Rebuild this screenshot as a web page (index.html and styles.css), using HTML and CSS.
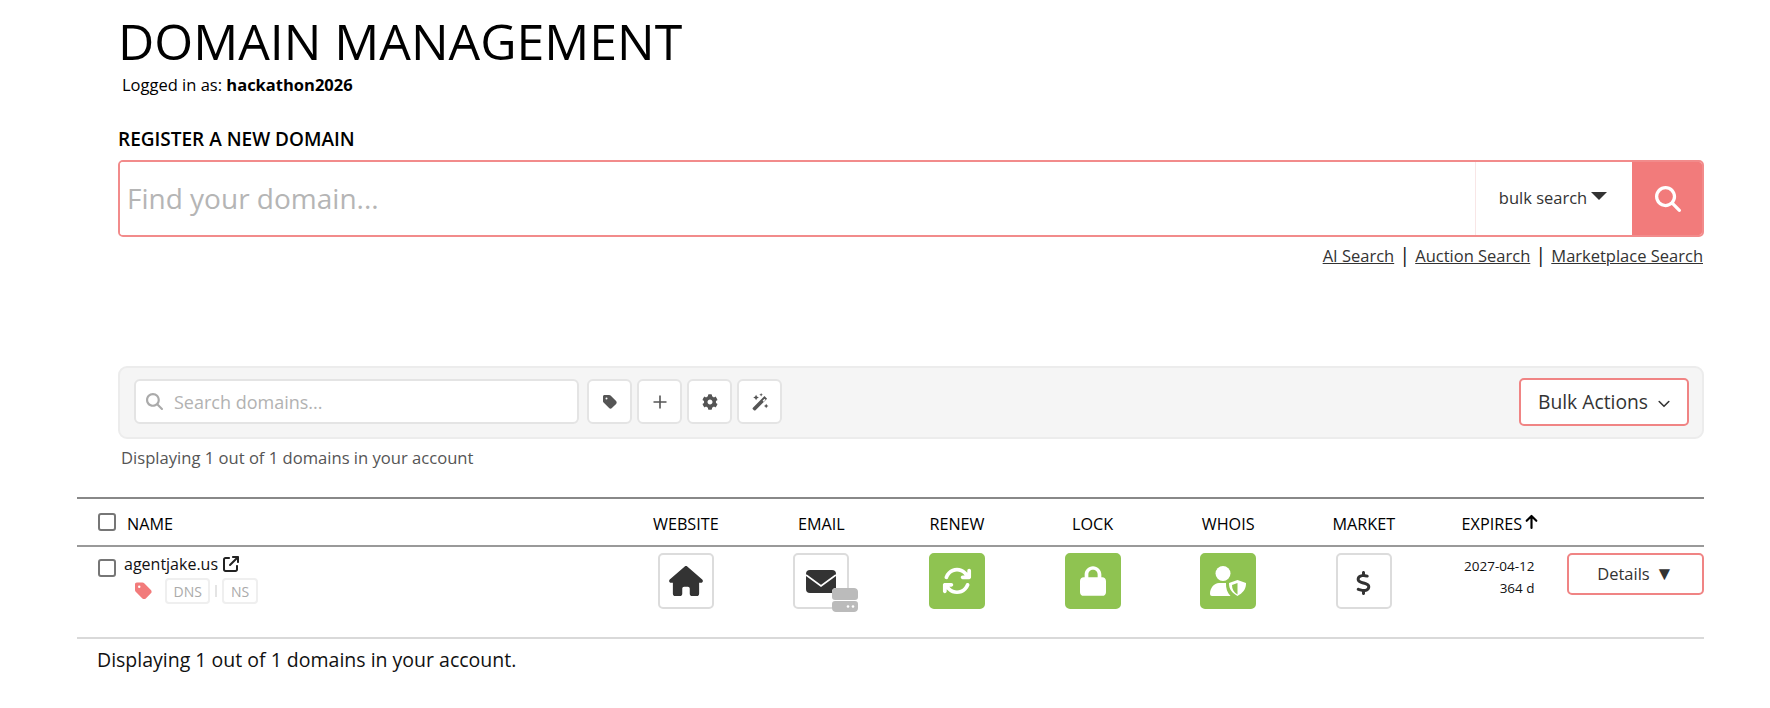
FILE: index.html
```html
<!DOCTYPE html>
<html lang="en">
<head>
<meta charset="utf-8">
<title>Domain Management</title>
<link rel="stylesheet" href="styles.css">
</head>
<body>
<main class="page">
  <h1 class="title">DOMAIN MANAGEMENT</h1>
  <p class="login">Logged in as: <b>hackathon2026</b></p>

  <h2 class="register">REGISTER A NEW DOMAIN</h2>
  <form class="finder">
    <input class="finder-input" type="text" placeholder="Find your domain...">
    <div class="bulk">bulk search<span class="caret"></span></div>
    <button class="finder-go" type="button" aria-label="Search">
      <svg class="i-go" viewBox="0 0 512 512"><path d="M416 208c0 45.900-14.900 88.300-40 122.700L502.600 457.400c12.500 12.500 12.500 32.800 0 45.300s-32.800 12.500-45.300 0L330.700 376c-34.400 25.200-76.800 40-122.700 40C93.100 416 0 322.900 0 208S93.100 0 208 0S416 93.100 416 208zM208 352a144 144 0 1 0 0-288 144 144 0 1 0 0 288z"/></svg>
    </button>
  </form>
  <div class="links">
    <a href="#">AI Search</a><span class="pipe">|</span><a href="#">Auction Search</a><span class="pipe">|</span><a href="#">Marketplace Search</a>
  </div>

  <section class="toolbar">
    <label class="dsearch">
      <svg class="i-dsearch" viewBox="0 0 512 512"><path d="M416 208c0 45.900-14.900 88.300-40 122.700L502.600 457.400c12.500 12.500 12.500 32.800 0 45.300s-32.800 12.500-45.300 0L330.700 376c-34.400 25.200-76.800 40-122.700 40C93.100 416 0 322.900 0 208S93.100 0 208 0S416 93.100 416 208zM208 352a144 144 0 1 0 0-288 144 144 0 1 0 0 288z"/></svg>
      <input class="dsearch-input" type="text" placeholder="Search domains...">
    </label>
    <button class="tool" type="button" aria-label="Tags"><svg class="i-tool" viewBox="0 0 448 512"><path d="M0 80V229.500c0 17 6.700 33.300 18.700 45.300l176 176c25 25 65.500 25 90.500 0L418.700 317.300c25-25 25-65.500 0-90.500l-176-176c-12-12-28.300-18.700-45.300-18.700H48C21.500 32 0 53.500 0 80zm112 32a32 32 0 1 1 0 64 32 32 0 1 1 0-64z"/></svg></button>
    <button class="tool" type="button" aria-label="Add"><svg class="i-tool" viewBox="0 0 16 16"><path d="M7.200 1.500h1.600v5.700h5.700v1.600H8.800v5.700H7.200V8.800H1.500V7.200h5.700z"/></svg></button>
    <button class="tool" type="button" aria-label="Settings"><svg class="i-tool" viewBox="0 0 512 512"><path d="M487.400 315.700l-42.600-24.600c4.300-23.200 4.300-47 0-70.200l42.600-24.600c4.900-2.800 7.100-8.600 5.500-14-11.100-35.600-30-67.800-54.700-94.600-3.800-4.100-10-5.100-14.800-2.300L380.800 110c-17.900-15.400-38.500-27.300-60.800-35.100V25.800c0-5.600-3.900-10.500-9.400-11.700-36.700-8.200-74.300-7.800-109.200 0-5.500 1.200-9.400 6.100-9.400 11.700V75c-22.200 7.900-42.800 19.800-60.800 35.100L88.700 85.500c-4.900-2.800-11-1.900-14.800 2.300-24.700 26.700-43.600 58.900-54.700 94.600-1.700 5.400.6 11.200 5.500 14L67.300 221c-4.300 23.200-4.300 47 0 70.200l-42.600 24.600c-4.900 2.800-7.100 8.600-5.500 14 11.100 35.600 30 67.800 54.700 94.600 3.800 4.100 10 5.100 14.800 2.300l42.600-24.600c17.900 15.400 38.500 27.300 60.800 35.100v49.200c0 5.600 3.900 10.500 9.400 11.700 36.700 8.200 74.300 7.800 109.200 0 5.500-1.200 9.400-6.100 9.400-11.700v-49.200c22.200-7.900 42.800-19.800 60.800-35.100l42.600 24.600c4.900 2.800 11 1.900 14.800-2.300 24.700-26.700 43.600-58.900 54.700-94.600 1.500-5.500-.7-11.300-5.600-14.100zM256 336c-44.100 0-80-35.900-80-80s35.900-80 80-80 80 35.900 80 80-35.900 80-80 80z"/></svg></button>
    <button class="tool" type="button" aria-label="Magic"><svg class="i-wand" viewBox="0 0 16 16"><path d="M12 2.700l2.300 2.300L4 15.300a1 1 0 0 1-1.400 0l-.9-.9a1 1 0 0 1 0-1.400zM10.300 6.800l.9.900 1.700-1.700-.9-.900z" fill-rule="evenodd"/><path d="M4.500 1.500l.8 1.700 1.700.8-1.700.8-.8 1.700-.8-1.700L2 4l1.700-.8zM9 0l.5 1.100 1.100.5-1.100.5L9 3.200l-.5-1.100-1.100-.5 1.100-.5zM13.500 9.500l.7 1.300 1.300.7-1.300.7-.7 1.300-.7-1.300-1.300-.7 1.300-.7z"/></svg></button>
    <button class="bulk-actions" type="button">Bulk Actions<svg class="i-chev" viewBox="0 0 12 8"><path d="M1.200 1.500L6 6.300l4.800-4.800" fill="none" stroke="currentColor" stroke-width="1.600" stroke-linecap="round" stroke-linejoin="round"/></svg></button>
  </section>
  <p class="count">Displaying 1 out of 1 domains in your account</p>

  <section class="table">
    <div class="row head">
      <div class="c-name"><input class="check" type="checkbox" aria-label="Select all"><span class="name-label">NAME</span></div>
      <div class="c-mid">WEBSITE</div>
      <div class="c-mid">EMAIL</div>
      <div class="c-mid">RENEW</div>
      <div class="c-mid">LOCK</div>
      <div class="c-mid">WHOIS</div>
      <div class="c-mid">MARKET</div>
      <div class="c-exp">EXPIRES<svg class="i-arrow" viewBox="0 0 12 14"><path d="M6 13V2M1.500 6.300L6 1.800l4.500 4.500" fill="none" stroke="currentColor" stroke-width="2" stroke-linecap="round" stroke-linejoin="round"/></svg></div>
      <div></div>
    </div>
    <div class="row body">
      <div class="c-domain">
        <input class="check check-row" type="checkbox" aria-label="Select agentjake.us">
        <div class="domain-info">
          <div class="domain-line">agentjake.us<svg class="i-ext" viewBox="0 0 512 512"><path d="M320 0c-17.700 0-32 14.300-32 32s14.300 32 32 32h82.700L201.400 265.400c-12.500 12.500-12.500 32.800 0 45.300s32.800 12.500 45.300 0L448 109.300V192c0 17.700 14.300 32 32 32s32-14.300 32-32V32c0-17.700-14.300-32-32-32H320zM80 32C35.800 32 0 67.800 0 112V432c0 44.200 35.800 80 80 80H400c44.200 0 80-35.800 80-80V320c0-17.700-14.300-32-32-32s-32 14.300-32 32V432c0 8.800-7.200 16-16 16H80c-8.800 0-16-7.200-16-16V112c0-8.800 7.200-16 16-16H192c17.700 0 32-14.300 32-32s-14.300-32-32-32H80z"/></svg></div>
          <div class="domain-tags">
            <svg class="i-tag" viewBox="0 0 448 512"><path d="M0 80V229.500c0 17 6.700 33.300 18.700 45.300l176 176c25 25 65.500 25 90.500 0L418.700 317.300c25-25 25-65.500 0-90.500l-176-176c-12-12-28.300-18.700-45.300-18.700H48C21.500 32 0 53.500 0 80zm112 32a32 32 0 1 1 0 64 32 32 0 1 1 0-64z"/></svg>
            <span class="chip">DNS</span><span class="chip-sep"></span><span class="chip">NS</span>
          </div>
        </div>
      </div>
      <div class="c-mid"><span class="tile"><svg class="i-home" viewBox="0 0 576 512"><path d="M575.800 255.500c0 18-15 32.100-32 32.100h-32l.7 160.200c0 2.700-.2 5.400-.5 8.100V472c0 22.100-17.900 40-40 40H456c-1.100 0-2.200 0-3.300-.1c-1.400 .1-2.800 .1-4.200 .1H416 392c-22.100 0-40-17.900-40-40V448 384c0-17.700-14.300-32-32-32H256c-17.700 0-32 14.300-32 32v64 24c0 22.100-17.900 40-40 40H160 128.100c-1.500 0-3-.1-4.500-.2c-1.200 .1-2.400 .2-3.600 .2H104c-22.100 0-40-17.900-40-40V360c0-.9 0-1.900 .1-2.800V287.600H32c-18 0-32-14-32-32.100c0-9 3-17 10-24L266.400 8c7-7 15-8 22-8s15 2 21 7L564.800 231.500c8 7 12 15 11 24z"/></svg></span></div>
      <div class="c-mid"><span class="tile">
        <svg class="i-mail" viewBox="0 0 30 23"><rect width="30" height="23" rx="4" fill="#333"/><path d="M0 5l15 11 15-11" fill="none" stroke="#fff" stroke-width="1.800"/></svg>
        <svg class="i-server" viewBox="0 0 26 24"><rect y="0" width="26" height="12" rx="3" fill="#bbb"/><rect y="13" width="26" height="11" rx="3" fill="#bbb"/><circle cx="16" cy="18.500" r="1.300" fill="#fff"/><circle cx="21" cy="18.500" r="1.300" fill="#fff"/></svg>
      </span></div>
      <div class="c-mid"><span class="tile tile-on"><svg class="i-sync" viewBox="0 0 512 512"><path d="M105.100 202.600c7.700-21.800 20.200-42.300 37.800-59.800c62.500-62.500 163.800-62.500 226.300 0L386.300 160H352c-17.700 0-32 14.300-32 32s14.300 32 32 32H463.500c0 0 0 0 0 0h.4c17.700 0 32-14.300 32-32V80c0-17.700-14.300-32-32-32s-32 14.300-32 32v35.200L414.400 97.600c-87.500-87.500-229.300-87.500-316.800 0C73.200 122 55.600 150.700 44.800 181.400c-5.900 16.700 2.900 34.900 19.500 40.800s34.900-2.900 40.800-19.500zM39 289.300c-5 1.500-9.800 4.200-13.700 8.200c-4 4-6.700 8.800-8.100 14c-.3 1.200-.6 2.500-.8 3.800c-.3 1.700-.4 3.400-.4 5.100V432c0 17.700 14.300 32 32 32s32-14.300 32-32V396.900l17.600 17.500 0 0c87.500 87.400 229.300 87.400 316.700 0c24.400-24.400 42.100-53.100 52.900-83.700c5.900-16.700-2.900-34.900-19.500-40.800s-34.900 2.900-40.800 19.500c-7.700 21.800-20.200 42.300-37.800 59.800c-62.500 62.500-163.800 62.500-226.300 0l-.1-.1L125.600 352H160c17.700 0 32-14.300 32-32s-14.300-32-32-32H48.400c-1.600 0-3.200 .1-4.800 .3s-3.100 .5-4.600 1z"/></svg></span></div>
      <div class="c-mid"><span class="tile tile-on"><svg class="i-lock" viewBox="0 0 448 512"><path d="M144 144v48H304V144c0-44.200-35.800-80-80-80s-80 35.800-80 80zM80 192V144C80 64.500 144.500 0 224 0s144 64.500 144 144v48h16c35.300 0 64 28.700 64 64V448c0 35.300-28.700 64-64 64H64c-35.300 0-64-28.700-64-64V256c0-35.300 28.700-64 64-64H80z"/></svg></span></div>
      <div class="c-mid"><span class="tile tile-on"><svg class="i-whois" viewBox="0 0 36 30"><circle cx="13" cy="7.500" r="7.500"/><path d="M9 17h7v.2c-.2 4.800 1.200 9.300 4.500 12.800H2a2 2 0 0 1-2-2c0-6 4-11 9-11z"/><path d="M27.500 14l8.500 3c.2 6-3 10-8.500 13-5.500-3-8.700-7-8.500-13zM27.500 17l-5.500 2c0 4 1.800 7.500 5.500 9.500z" fill-rule="evenodd"/></svg></span></div>
      <div class="c-mid"><span class="tile"><svg class="i-dollar" viewBox="0 0 320 512"><path d="M160 0c17.700 0 32 14.300 32 32V67.700c1.600 .2 3.100 .4 4.700 .7c.4 .1 .7 .1 1.100 .2l48 8.800c17.400 3.200 28.900 19.900 25.700 37.200s-19.900 28.900-37.200 25.700l-47.500-8.700c-31.300-4.600-58.900-1.500-78.300 6.200s-27.200 18.300-29 28.100c-2 10.700-.5 16.700 1.200 20.400c1.800 3.900 5.500 8.300 12.800 13.200c16.300 10.700 41.300 17.700 73.700 26.300l2.900 .8c28.600 7.600 63.600 16.800 89.600 33.800c14.200 9.300 27.600 21.900 35.900 39.500c8.500 17.900 10.300 37.900 6.400 59.200c-6.900 38-33.100 63.400-65.600 76.700c-13.700 5.600-28.600 9.200-44.400 11V480c0 17.700-14.300 32-32 32s-32-14.300-32-32V445.100c-.4-.1-.9-.1-1.300-.2l-.2 0 0 0c-24.400-3.800-64.500-14.300-91.500-26.300c-16.100-7.200-23.400-26.100-16.200-42.200s26.100-23.400 42.200-16.200c20.900 9.300 55.300 18.500 75.200 21.600c31.900 4.700 58.200 2 76-5.300c16.900-6.900 24.600-16.900 26.800-28.900c1.900-10.600 .4-16.700-1.300-20.400c-1.900-4-5.600-8.400-13-13.300c-16.400-10.700-41.500-17.700-74-26.300l-2.800-.7 0 0C119.400 279.300 84.400 270 58.400 253c-14.200-9.300-27.500-22-35.800-39.600c-8.400-17.900-10.100-37.900-6.100-59.200C23.700 116 52.300 91.200 84.800 78.300c13.300-5.300 27.900-8.900 43.200-11V32c0-17.700 14.300-32 32-32z"/></svg></span></div>
      <div class="c-date"><span>2027-04-12</span><span>364 d</span></div>
      <div class="c-act"><button class="details" type="button">Details <span class="tri">▼</span></button></div>
    </div>
    <p class="foot">Displaying 1 out of 1 domains in your account.</p>
  </section>
</main>
</body>
</html>
```
FILE: styles.css
```css
* { box-sizing: border-box; }
html, body { margin: 0; background: #fff; }
body { font-family: "Open Sans", "Liberation Sans", sans-serif; color: #000; }
.page { width: 1704px; padding: 13px 0 0 118px; }
.title { margin: 0; font-size: 50px; line-height: 56px; font-weight: 400; }
.login { margin: 4px 0 0 4px; font-size: 16.500px; line-height: 24px; }
.login b { font-weight: 700; }
.register { margin: 31px 0 0; font-size: 19px; line-height: 22px; font-weight: 600; }
.finder { display: flex; height: 77px; margin-top: 10px; border: 2px solid #f28b8b; border-radius: 5px; overflow: hidden; }
.finder-input { flex: 1; min-width: 0; border: 0; outline: 0; padding: 0 7px 2px; font: 400 28px "Open Sans", sans-serif; color: #333; background: #fff; }
.finder-input::placeholder { color: #b5b5b5; opacity: 1; }
.bulk { width: 157px; display: flex; align-items: center; justify-content: center; gap: 4px; border-left: 1px solid #f8e6e6; font-size: 16.500px; color: #333; padding: 0 2px 2px 0; }
.caret { width: 0; height: 0; border: 8px solid transparent; border-top: 8px solid #333; border-bottom: 0; margin-bottom: 4px; }
.finder-go { width: 72px; margin: -2px -2px -2px 0; border: 0; background: #f27b7b; display: flex; align-items: center; justify-content: center; padding: 0; }
.i-go { width: 26px; height: 26px; fill: #fff; }
.links { display: flex; justify-content: flex-end; align-items: center; height: 22px; margin-top: 7px; font-size: 16.500px; padding-right: 1px; }
.links a { color: #333; text-decoration: underline; }
.pipe { margin: 0 5px; font-size: 20px; line-height: 22px; color: #111; }
.toolbar { display: flex; align-items: center; gap: 5px; height: 73px; margin-top: 100px; padding: 0 13px 2px 14px; background: #f5f5f5; border: 2px solid #ececec; border-radius: 9px; }
.dsearch { width: 445px; height: 45px; margin-right: 3px; display: flex; align-items: center; gap: 11px; padding: 0 10px; background: #fff; border: 2px solid #e4e4e4; border-radius: 6px; }
.i-dsearch { width: 17px; height: 17px; fill: #aaa; flex: none; }
.dsearch-input { flex: 1; min-width: 0; border: 0; outline: 0; background: transparent; padding: 0; font: 400 18px "Open Sans", sans-serif; }
.dsearch-input::placeholder { color: #b2b2b2; opacity: 1; }
.tool { width: 45px; height: 45px; padding: 0; background: #fff; border: 2px solid #e4e4e4; border-radius: 6px; display: flex; align-items: center; justify-content: center; }
.i-tool { width: 16px; height: 16px; fill: #555; }
.i-wand { width: 18px; height: 18px; fill: #555; }
.bulk-actions { margin-left: auto; width: 170px; height: 48px; display: flex; align-items: center; justify-content: center; gap: 10px; background: #fff; border: 2px solid #f08484; border-radius: 5px; font: 400 19.300px "Open Sans", sans-serif; color: #333; padding: 0; }
.i-chev { width: 12px; height: 8px; margin-top: 4px; }
.count { margin: 7px 0 0 3px; font-size: 16.600px; line-height: 24px; color: #555; }
.table { margin: 27px 0 0 -41px; }
.row { display: grid; grid-template-columns: 541px repeat(6, 135.600px) 135px 1fr; }
.head { height: 50px; border-top: 2px solid #888; border-bottom: 2px solid #999; align-items: center; font-size: 16.200px; }
.body { height: 92px; border-bottom: 2px solid #d9d9d9; align-items: flex-start; padding-top: 6px; }
.c-name { display: flex; align-items: center; padding: 0 0 0 21px; }
.name-label { margin-left: 11px; margin-top: 3px; }
.head .c-mid, .head .c-exp { margin-top: 3px; }
.c-mid { display: flex; justify-content: center; }
.c-exp { display: flex; align-items: center; padding-left: 30px; gap: 3px; }
.i-arrow { width: 13px; height: 15px; margin-top: -4px; }
.check { appearance: none; -webkit-appearance: none; width: 18px; height: 18px; margin: 0; background: #fff; border: 2px solid #767676; border-radius: 3px; flex: none; }
.c-domain { display: flex; padding-left: 21px; align-items: flex-start; }
.check-row { margin-top: 6px; }
.domain-info { margin: 0 0 0 8px; }
.domain-line { display: flex; align-items: center; gap: 5px; font-size: 16px; line-height: 22px; color: #111; }
.i-ext { width: 16px; height: 16px; fill: #222; }
.domain-tags { display: flex; align-items: center; margin: 3px 0 0 11px; }
.i-tag { width: 17px; height: 20px; fill: #f27b7b; margin-right: 13px; }
.chip { height: 26px; padding: 0 6.500px; display: flex; align-items: center; border: 2px solid #efefef; border-radius: 4px; font-size: 14px; color: #aaa; }
.chip-sep { width: 2px; height: 12px; margin: 0 5px; background: #e4e4e4; }
.tile { position: relative; width: 56px; height: 56px; display: flex; align-items: center; justify-content: center; background: #fff; border: 2px solid #dcdcdc; border-radius: 5px; }
.tile-on { background: #8fc351; border-color: #8fc351; }
.i-home { width: 34px; height: 30px; fill: #333; }
.i-mail { width: 30px; height: 23px; }
.i-server { position: absolute; right: -11px; bottom: -5px; width: 26px; height: 24px; background: #fff; border-radius: 4px; }
.i-sync { width: 30px; height: 30px; fill: #fff; }
.i-lock { width: 26px; height: 30px; fill: #fff; }
.i-whois { width: 36px; height: 30px; fill: #fff; }
.i-dollar { width: 15px; height: 24px; fill: #333; margin-top: 3px; }
.c-date { display: flex; flex-direction: column; align-items: flex-end; padding: 2px 32px 0 0; font-size: 13.500px; line-height: 22px; color: #111; }
.c-act { display: flex; justify-content: flex-end; }
.details { width: 137px; height: 42px; padding: 0 0 2px; background: #fff; border: 2px solid #f08484; border-radius: 5px; font: 400 16.500px "Open Sans", sans-serif; color: #333; }
.tri { font-size: 19px; line-height: 20px; margin-left: 1px; }
.foot { margin: 9px 0 0 20px; font-size: 19.500px; line-height: 24px; color: #111; }
```
